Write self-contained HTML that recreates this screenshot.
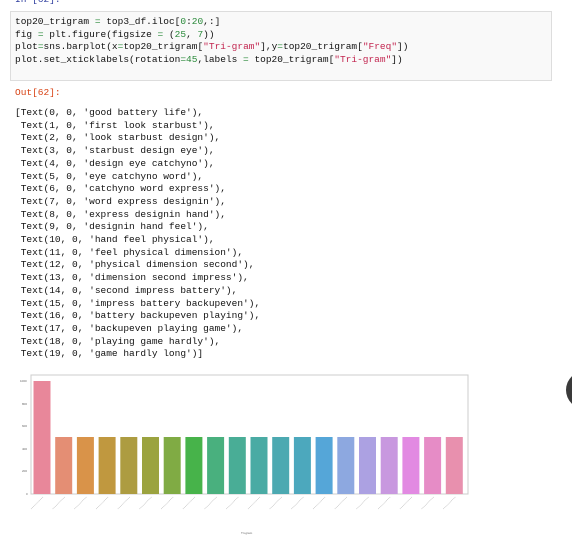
<!DOCTYPE html><html><head><style>
body{margin:0;width:572px;height:547px;background:#fff;position:relative;overflow:hidden;font-family:"Liberation Mono",monospace;}
.t{position:absolute;font-size:9.5px;line-height:12.7px;white-space:pre;color:#111}
.box{position:absolute;left:10px;top:11px;width:540px;height:68px;border:1px solid #ddd;background:#f9f9f9}
.g{color:#2a8a3a}.s{color:#c2254f}
</style></head><body>
<div class="t" style="left:15px;top:-6px;color:#303f9f">In [62]:</div>
<div class="box"></div>
<div class="t" style="left:15px;top:16px">top20_trigram <span class="g">=</span> top3_df.iloc[<span class="g">0</span>:<span class="g">20</span>,:]
fig <span class="g">=</span> plt.figure(figsize <span class="g">=</span> (<span class="g">25</span>, <span class="g">7</span>))
plot<span class="g">=</span>sns.barplot(x<span class="g">=</span>top20_trigram[<span class="s">"Tri-gram"</span>],y<span class="g">=</span>top20_trigram[<span class="s">"Freq"</span>])
plot.set_xticklabels(rotation<span class="g">=</span><span class="g">45</span>,labels <span class="g">=</span> top20_trigram[<span class="s">"Tri-gram"</span>])</div>
<div class="t" style="left:15px;top:87px;color:#d84315">Out[62]:</div>
<div class="t" style="left:15px;top:107px">[Text(0, 0, 'good battery life'),
 Text(1, 0, 'first look starbust'),
 Text(2, 0, 'look starbust design'),
 Text(3, 0, 'starbust design eye'),
 Text(4, 0, 'design eye catchyno'),
 Text(5, 0, 'eye catchyno word'),
 Text(6, 0, 'catchyno word express'),
 Text(7, 0, 'word express designin'),
 Text(8, 0, 'express designin hand'),
 Text(9, 0, 'designin hand feel'),
 Text(10, 0, 'hand feel physical'),
 Text(11, 0, 'feel physical dimension'),
 Text(12, 0, 'physical dimension second'),
 Text(13, 0, 'dimension second impress'),
 Text(14, 0, 'second impress battery'),
 Text(15, 0, 'impress battery backupeven'),
 Text(16, 0, 'battery backupeven playing'),
 Text(17, 0, 'backupeven playing game'),
 Text(18, 0, 'playing game hardly'),
 Text(19, 0, 'game hardly long')]</div>
<svg style="position:absolute;left:0;top:0" width="572" height="547">
<rect x="31" y="375" width="437" height="119" fill="none" stroke="#ccc" stroke-width="1"/>
<g id="bars"></g>
<g font-size="3" fill="#666" font-family="Liberation Sans">
<text x="20" y="382">1000</text><text x="22" y="405">800</text><text x="22" y="427">600</text><text x="22" y="450">400</text><text x="22" y="472">200</text><text x="26" y="495">0</text>
<text x="241" y="534">Tri-gram</text>
</g>
<g stroke="#bbb" stroke-width="0.6" stroke-dasharray="1 0.6" id="ticks"></g>
<circle cx="585" cy="390" r="19" fill="#3a3a3a"/>
</svg>
<script>
var c=["#e8879a","#e48e74","#d99349","#c0983f","#ad9c41","#9ba33f","#80ab44","#47b34a","#49b07e","#49ad96","#4aaba4","#4ca9b1","#4ca8bd","#55a6d8","#8da8e0","#aca1e2","#c898df","#e28ae2","#e68cc6","#e890ae"];
var g=document.getElementById("bars"),t=document.getElementById("ticks"),h="",k="";
for(var i=0;i<20;i++){var x=33.5+i*21.7;var y=i==0?381:437;
h+='<rect x="'+x+'" y="'+y+'" width="17" height="'+(494-y)+'" fill="'+c[i]+'"/>';
var cx=x+8.5;k+='<line x1="'+(cx+1)+'" y1="497" x2="'+(cx-11)+'" y2="509"/>';}
g.innerHTML=h;t.innerHTML=k;
</script>
</body></html>
